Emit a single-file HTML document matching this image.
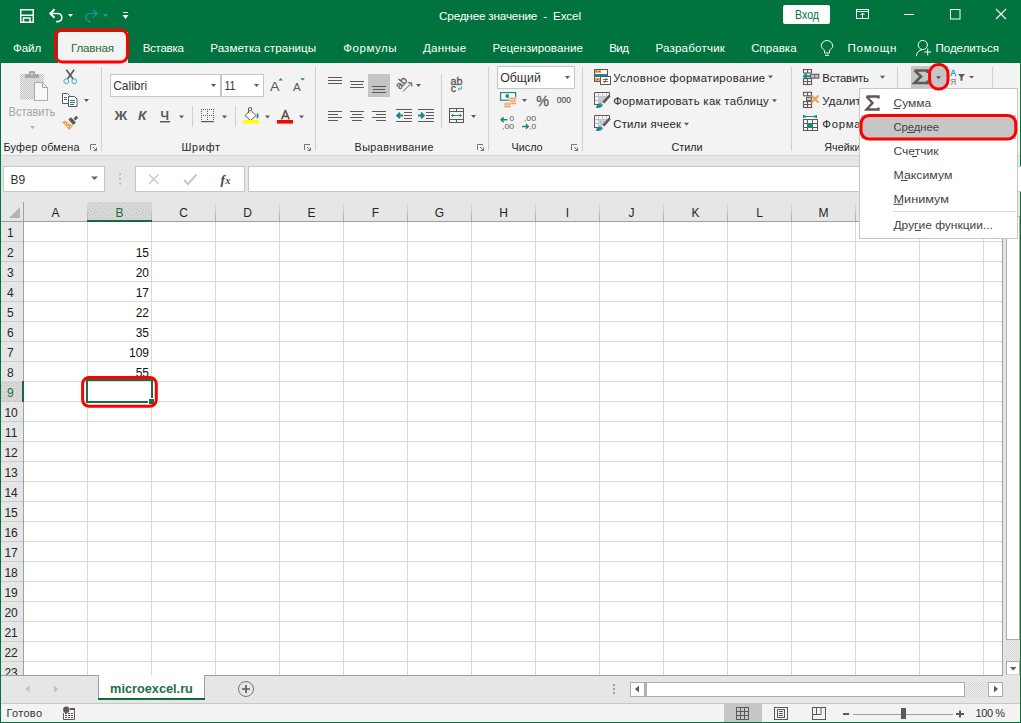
<!DOCTYPE html>
<html><head><meta charset="utf-8"><title>Excel</title>
<style>
html,body{margin:0;padding:0;width:1021px;height:723px;overflow:hidden;background:#01733e}
svg{display:block;font-family:"Liberation Sans",sans-serif}
</style></head><body>
<svg width="1021" height="723" viewBox="0 0 1021 723">
<defs>
<pattern id="gridp" x="24" y="222" width="64" height="20" patternUnits="userSpaceOnUse">
<rect width="64" height="20" fill="#fff"/><rect x="63" width="1" height="20" fill="#d9d9d9"/><rect y="19" width="64" height="1" fill="#d9d9d9"/>
</pattern>
<pattern id="dith" x="0" y="0" width="2" height="2" patternUnits="userSpaceOnUse"><rect width="2" height="2" fill="#eeeeee"/><rect width="1" height="1" fill="#d2d2d2"/><rect x="1" y="1" width="1" height="1" fill="#d8d8d8"/></pattern>
<pattern id="dith2" x="0" y="0" width="2" height="2" patternUnits="userSpaceOnUse"><rect width="2" height="2" fill="#e9e9e9"/><rect width="1" height="1" fill="#c2c2c2"/><rect x="1" y="1" width="1" height="1" fill="#c8c8c8"/></pattern>
<pattern id="hdot" x="0" y="0" width="6" height="6" patternUnits="userSpaceOnUse"><rect width="6" height="6" fill="#d7d7d7"/><rect x="1" y="1" width="1" height="1" fill="#bdbdbd"/><rect x="4" y="2" width="1" height="1" fill="#c2c2c2"/><rect x="2" y="4" width="1" height="1" fill="#c2c2c2"/><rect x="5" y="5" width="1" height="1" fill="#bdbdbd"/></pattern>
<linearGradient id="hsep" x1="0" y1="0" x2="0" y2="1"><stop offset="0" stop-color="#e0e2e1"/><stop offset="1" stop-color="#a9b0ad"/></linearGradient>
</defs>
<rect x="0" y="0" width="1021" height="723" fill="#01733e" />
<rect x="1" y="63" width="1019" height="92" fill="#f3f3f3" />
<rect x="1" y="155" width="1019" height="1" fill="#d5d5d5" />
<rect x="1" y="156" width="1019" height="46" fill="#e6e6e6" />
<path d="M20.75 9.75h12.5v12.5h-12.5z" fill="none" stroke="#ffffff" stroke-width="1.5"/>
<path d="M20.75 15.25h12.5" stroke="#ffffff" stroke-width="1.5"/>
<path d="M23.5 22v-4h6.5v4" fill="none" stroke="#ffffff" stroke-width="1.5"/>
<path d="M50.5 13.5h7.2a4.1 4.1 0 0 1 0 8.2h-1.5" fill="none" stroke="#ffffff" stroke-width="1.7"/>
<path d="M54.5 9.3l-4.2 4.2l4.2 4.2" fill="none" stroke="#ffffff" stroke-width="2"/>
<path d="M68 14h5l-2.5 3z" fill="#ffffff"/>
<path d="M96.5 13.5h-6.5a4.1 4.1 0 0 0 0 8.2h1" fill="none" stroke="#2e9b95" stroke-width="1.6" opacity="0.75"/>
<path d="M93 9.5l4 4l-4 4" fill="none" stroke="#2e9b95" stroke-width="1.6" opacity="0.75"/>
<path d="M103 14h5l-2.5 3z" fill="#2e9b95"/>
<rect x="123" y="12" width="5" height="1" fill="#ffffff" />
<path d="M122.5 15h6l-3.0 4z" fill="#ffffff"/>
<text x="439" y="20" font-size="11.8" fill="#ffffff" textLength="142" lengthAdjust="spacing" xml:space="preserve">Среднее значение  -  Excel</text>
<rect x="783" y="5" width="47" height="19" rx="2" fill="#fff"/>
<text x="795" y="19" font-size="12" fill="#01733e" textLength="24" lengthAdjust="spacingAndGlyphs" >Вход</text>
<g fill="none" stroke="#ffffff" stroke-width="1"><rect x="856.5" y="9.5" width="12" height="9"/><path d="M856.5 11.5h12"/><path d="M862.5 18v-5M860.5 15l2-2 2 2"/></g>
<rect x="904" y="14" width="10" height="1" fill="#ffffff" />
<rect x="950.5" y="9.5" width="9.5" height="9.5" fill="none" stroke="#ffffff" stroke-width="1"/>
<path d="M996 9l10 10M1006 9l-10 10" stroke="#ffffff" stroke-width="1.1"/>
<rect x="58" y="32" width="70" height="31" fill="#f3f3f3" />
<text x="13" y="52" font-size="11.6" fill="#ffffff" textLength="28.2" lengthAdjust="spacing" >Файл</text>
<text x="71" y="52" font-size="11.6" fill="#1e6b40" textLength="43.1" lengthAdjust="spacing" >Главная</text>
<text x="142.7" y="52" font-size="11.6" fill="#ffffff" textLength="41.2" lengthAdjust="spacing" >Вставка</text>
<text x="210.3" y="52" font-size="11.6" fill="#ffffff" textLength="105.8" lengthAdjust="spacing" >Разметка страницы</text>
<text x="343.3" y="52" font-size="11.6" fill="#ffffff" textLength="53.3" lengthAdjust="spacing" >Формулы</text>
<text x="423" y="52" font-size="11.6" fill="#ffffff" textLength="43.1" lengthAdjust="spacing" >Данные</text>
<text x="492.6" y="52" font-size="11.6" fill="#ffffff" textLength="90.3" lengthAdjust="spacing" >Рецензирование</text>
<text x="609.3" y="52" font-size="11.6" fill="#ffffff" textLength="19.6" lengthAdjust="spacing" >Вид</text>
<text x="655.4" y="52" font-size="11.6" fill="#ffffff" textLength="69.5" lengthAdjust="spacing" >Разработчик</text>
<text x="751.2" y="52" font-size="11.6" fill="#ffffff" textLength="45.4" lengthAdjust="spacing" >Справка</text>
<text x="847.5" y="52" font-size="11.6" fill="#ffffff" textLength="49" lengthAdjust="spacing" >Помощн</text>
<text x="935.5" y="52" font-size="11.6" fill="#ffffff" textLength="63.5" lengthAdjust="spacing" >Поделиться</text>
<g fill="none" stroke="#ffffff" stroke-width="1"><path d="M824.5 53v-2c0-1.6-3.3-3-3.3-4.7a5.8 5.8 0 0 1 11.6 0c0 1.7-3.3 3.1-3.3 4.7v2z"/><path d="M825 55.3h4"/></g>
<g fill="none" stroke="#ffffff" stroke-width="1"><circle cx="922.8" cy="45" r="4.6"/><path d="M916.3 56.2c0.5-4 2.8-6.2 5.8-6.5"/><path d="M927.7 48.5v7M924.2 52h7"/></g>
<rect x="55.5" y="30" width="72" height="32" rx="7" fill="none" stroke="#ff0000" stroke-width="3"/>
<rect x="20" y="74" width="24" height="25.5" fill="url(#dith2)"/>
<rect x="25" y="74" width="14" height="4" fill="#a8a8a8" />
<rect x="29" y="71" width="6" height="4" rx="1" fill="#a8a8a8"/>
<rect x="31" y="73" width="2" height="2" fill="#d8d8d8" />
<path d="M34.5 82.5h8l5 5v13h-13z" fill="#f7f7f7" stroke="#a8a8a8"/>
<path d="M42.5 82.5v5h5" fill="none" stroke="#a8a8a8"/>
<text x="8.6" y="116" font-size="12" fill="#a6a6a6" textLength="46.7" lengthAdjust="spacingAndGlyphs" >Вставить</text>
<path d="M30 126h5l-2.5 3z" fill="#b0b0b0"/>
<path d="M66.3 69.8l6.8 9.2M74.2 69.8l-6.8 9.2" stroke="#605856" stroke-width="1.7"/>
<g fill="none" stroke="#41a5ee" stroke-width="1"><circle cx="66.3" cy="81.2" r="2.4"/><circle cx="74.2" cy="81.2" r="2.4"/></g>
<path d="M62.5 93.5h5l2 2v8h-7z" fill="#fff" stroke="#605856"/>
<path d="M68.5 96.5h6l2.5 2.5v7.5h-8.5z" fill="#fff" stroke="#605856"/>
<g stroke="#1d8783"><path d="M64 97.5h3M64 99.5h3M70 100.5h5M70 102.5h5M70 104.5h4"/></g>
<path d="M84 99h5l-2.5 3z" fill="#605856"/>
<path d="M68.3 119.5L71 117.3L75.9 122.5L73.3 124.9z" fill="#605856"/>
<path d="M73.5 118.5L76.2 115.8L78.2 117.8L75.4 120.6z" fill="#605856"/>
<path d="M62 122.3L65 120.5L73 125.7L69.2 130.2L66 126z" fill="#f0a35f"/>
<g fill="#fdf3c8"><rect x="65" y="123" width="1" height="1"/><rect x="67" y="123" width="1" height="1"/><rect x="67.5" y="126" width="1" height="1"/><rect x="70" y="126" width="1" height="1"/></g>
<text x="3.5" y="150.6" font-size="10.8" fill="#262626" textLength="76" lengthAdjust="spacing" >Буфер обмена</text>
<g fill="none" stroke="#7a7372" stroke-width="1"><path d="M90.5 150v-5.5h5.5"/><path d="M93 147l3.5 3.5M96.5 147.5v3h-3"/></g>
<rect x="101" y="67" width="1" height="84" fill="#d0d0d0" />
<rect x="110.5" y="74.5" width="110" height="22" fill="#fff" stroke="#c6c6c6"/>
<rect x="221.5" y="74.5" width="42" height="22" fill="#fff" stroke="#c6c6c6"/>
<text x="113.2" y="89.8" font-size="12.5" fill="#333" textLength="34" lengthAdjust="spacingAndGlyphs" >Calibri</text>
<path d="M211 84h5l-2.5 3z" fill="#605856"/>
<text x="224.4" y="89.8" font-size="12.5" fill="#333" textLength="11" lengthAdjust="spacingAndGlyphs" >11</text>
<path d="M254 84h5l-2.5 3z" fill="#605856"/>
<text x="270" y="91" font-size="13" fill="#605856" textLength="9.5" lengthAdjust="spacingAndGlyphs" >A</text>
<path d="M278.5 80.5l2.2-2.5l2.2 2.5z" fill="#1d8783"/>
<text x="293" y="91" font-size="10.5" fill="#605856" textLength="7.8" lengthAdjust="spacingAndGlyphs" >A</text>
<path d="M300.3 78.2h4.6l-2.3 2.4z" fill="#1d8783"/>
<text x="114.6" y="120.2" font-size="12.5" fill="#605856" textLength="12.7" lengthAdjust="spacingAndGlyphs" font-weight="bold" >Ж</text>
<text x="137.9" y="120.2" font-size="12.5" fill="#605856" textLength="8.5" lengthAdjust="spacingAndGlyphs" font-weight="bold" font-style="italic">К</text>
<text x="160.4" y="120.2" font-size="12.5" fill="#605856" textLength="8.5" lengthAdjust="spacingAndGlyphs" font-weight="bold" >Ч</text>
<rect x="160" y="121" width="10" height="1.5" fill="#605856" />
<path d="M179 115.5h5l-2.5 3z" fill="#605856"/>
<rect x="192" y="106" width="1" height="21" fill="#d0d0d0" />
<g fill="#605856"><rect x="201" y="109" width="1" height="1"/><rect x="201" y="115" width="1" height="1"/><rect x="203" y="109" width="1" height="1"/><rect x="203" y="115" width="1" height="1"/><rect x="205" y="109" width="1" height="1"/><rect x="205" y="115" width="1" height="1"/><rect x="207" y="109" width="1" height="1"/><rect x="207" y="115" width="1" height="1"/><rect x="209" y="109" width="1" height="1"/><rect x="209" y="115" width="1" height="1"/><rect x="211" y="109" width="1" height="1"/><rect x="211" y="115" width="1" height="1"/><rect x="213" y="109" width="1" height="1"/><rect x="213" y="115" width="1" height="1"/><rect x="201" y="109" width="1" height="1"/><rect x="207" y="109" width="1" height="1"/><rect x="213" y="109" width="1" height="1"/><rect x="201" y="111" width="1" height="1"/><rect x="207" y="111" width="1" height="1"/><rect x="213" y="111" width="1" height="1"/><rect x="201" y="113" width="1" height="1"/><rect x="207" y="113" width="1" height="1"/><rect x="213" y="113" width="1" height="1"/><rect x="201" y="115" width="1" height="1"/><rect x="207" y="115" width="1" height="1"/><rect x="213" y="115" width="1" height="1"/><rect x="201" y="117" width="1" height="1"/><rect x="207" y="117" width="1" height="1"/><rect x="213" y="117" width="1" height="1"/><rect x="201" y="119" width="1" height="1"/><rect x="207" y="119" width="1" height="1"/><rect x="213" y="119" width="1" height="1"/></g>
<rect x="201" y="121" width="13" height="1.2" fill="#605856" />
<path d="M222 115.5h5l-2.5 3z" fill="#605856"/>
<rect x="235" y="106" width="1" height="21" fill="#d0d0d0" />
<path d="M245 115.5l5.5-5.5l5.5 5.5l-5.5 5z" fill="#fff" stroke="#605856" stroke-width="1"/>
<path d="M248.5 113v-4a1.6 1.6 0 0 1 3.2 0v1" fill="none" stroke="#605856" stroke-width="1"/>
<path d="M257 112.5q2.5 2.5 1 5.5l-1.5 0.5z" fill="#1d8783"/>
<rect x="243" y="120" width="16" height="3.6" fill="#ffff00" />
<path d="M265 115.5h5l-2.5 3z" fill="#605856"/>
<path d="M281.6 119.5l3.7-9h0.2l3.7 9M282.9 116.3h5" fill="none" stroke="#605856" stroke-width="1.7"/>
<rect x="277" y="120" width="16" height="3.6" fill="#ff0000" />
<path d="M299 115.5h5l-2.5 3z" fill="#605856"/>
<text x="181.4" y="150.8" font-size="10.8" fill="#262626" textLength="38.6" lengthAdjust="spacing" >Шрифт</text>
<g fill="none" stroke="#7a7372" stroke-width="1"><path d="M304.5 150v-5.5h5.5"/><path d="M307 147l3.5 3.5M310.5 147.5v3h-3"/></g>
<rect x="315" y="67" width="1" height="84" fill="#d0d0d0" />
<rect x="328" y="77" width="14" height="1" fill="#605856" />
<rect x="328" y="80" width="14" height="1" fill="#605856" />
<rect x="328" y="83" width="14" height="1" fill="#605856" />
<rect x="350" y="81" width="14" height="1" fill="#605856" />
<rect x="351" y="84" width="12" height="1" fill="#605856" />
<rect x="350" y="87" width="14" height="1" fill="#605856" />
<rect x="368" y="74" width="22" height="23" fill="#c5c5c5" />
<rect x="372" y="86" width="14" height="1" fill="#605856" />
<rect x="373" y="89" width="12" height="1" fill="#605856" />
<rect x="372" y="92" width="14" height="1" fill="#605856" />
<text x="0" y="0" font-size="11" fill="#605856" stroke="#605856" stroke-width="0.3" transform="translate(400 90) rotate(-50)">ab</text>
<path d="M403 91.5l8.5-8.5M408 82.8h3.8v3.8" fill="none" stroke="#605856" stroke-width="1"/>
<path d="M416 84h5l-2.5 3z" fill="#605856"/>
<rect x="441" y="74" width="1" height="54" fill="#d0d0d0" />
<text x="450.5" y="84.6" font-size="10.5" fill="#605856" textLength="12" lengthAdjust="spacingAndGlyphs" stroke="#605856" stroke-width="0.35">ab</text>
<text x="450.8" y="91.6" font-size="10.5" fill="#605856" stroke="#605856" stroke-width="0.35">c</text>
<path d="M461.5 86.5v2.5h-3M459.5 87.8l-1.3 1.2l1.3 1.2" fill="none" stroke="#1e9bc0" stroke-width="0.9"/>
<rect x="328" y="111" width="14" height="1" fill="#605856" />
<rect x="328" y="114" width="10" height="1" fill="#605856" />
<rect x="328" y="117" width="14" height="1" fill="#605856" />
<rect x="328" y="120" width="10" height="1" fill="#605856" />
<rect x="350" y="111" width="14" height="1" fill="#605856" />
<rect x="352" y="114" width="10" height="1" fill="#605856" />
<rect x="350" y="117" width="14" height="1" fill="#605856" />
<rect x="352" y="120" width="10" height="1" fill="#605856" />
<rect x="372" y="111" width="14" height="1" fill="#605856" />
<rect x="376" y="114" width="10" height="1" fill="#605856" />
<rect x="372" y="117" width="14" height="1" fill="#605856" />
<rect x="376" y="120" width="10" height="1" fill="#605856" />
<rect x="396" y="109" width="16" height="1" fill="#605856" />
<rect x="404" y="112" width="8" height="1" fill="#605856" />
<rect x="404" y="115" width="8" height="1" fill="#605856" />
<rect x="404" y="118" width="8" height="1" fill="#605856" />
<rect x="396" y="121" width="16" height="1" fill="#605856" />
<path d="M403 115.5h-5.5M400 112.8l-2.7 2.7l2.7 2.7" fill="none" stroke="#1d8783" stroke-width="2"/>
<rect x="418" y="109" width="16" height="1" fill="#605856" />
<rect x="426" y="112" width="8" height="1" fill="#605856" />
<rect x="426" y="115" width="8" height="1" fill="#605856" />
<rect x="426" y="118" width="8" height="1" fill="#605856" />
<rect x="418" y="121" width="16" height="1" fill="#605856" />
<path d="M418 115.5h5.5M421 112.8l2.7 2.7l-2.7 2.7" fill="none" stroke="#1d8783" stroke-width="2"/>
<g fill="none" stroke="#605856" stroke-width="1"><rect x="449.5" y="108.5" width="14" height="14"/><path d="M449.5 111.5h14M449.5 119.5h14M456.5 108.5v3M456.5 119.5v3"/></g>
<path d="M451.5 115.5h10M453.3 114l-1.8 1.5l1.8 1.5M459.7 114l1.8 1.5l-1.8 1.5" fill="none" stroke="#1d8783" stroke-width="1"/>
<path d="M471 115h5l-2.5 3z" fill="#605856"/>
<text x="354.6" y="150.8" font-size="10.8" fill="#262626" textLength="78.8" lengthAdjust="spacing" >Выравнивание</text>
<g fill="none" stroke="#7a7372" stroke-width="1"><path d="M477.5 150v-5.5h5.5"/><path d="M480 147l3.5 3.5M483.5 147.5v3h-3"/></g>
<rect x="488" y="67" width="1" height="84" fill="#d0d0d0" />
<rect x="497.5" y="66.5" width="77" height="22" fill="#fff" stroke="#c6c6c6"/>
<text x="500.2" y="81.6" font-size="12.5" fill="#333" textLength="40.6" lengthAdjust="spacingAndGlyphs" >Общий</text>
<path d="M565 76h5l-2.5 3z" fill="#605856"/>
<rect x="500.6" y="92.6" width="15" height="7.6" fill="#fff" stroke="#1d8783" stroke-width="1.2"/>
<circle cx="507.3" cy="96" r="1.9" fill="#1d8783"/>
<circle cx="507.8" cy="95.5" r="0.8" fill="#41a5ee"/>
<g fill="#f0a35f" stroke="#f3f3f3" stroke-width="0.6"><rect x="509" y="97.2" width="7.2" height="2.4" rx="1"/><rect x="509" y="99.7" width="7.2" height="2.4" rx="1"/><rect x="509" y="102.2" width="7.2" height="2.4" rx="1"/><rect x="503.8" y="102.8" width="7.2" height="2.4" rx="1"/><rect x="503.8" y="105.3" width="7.2" height="2.4" rx="1"/></g>
<path d="M522 99h5l-2.5 3z" fill="#605856"/>
<text x="536.3" y="105.7" font-size="14.5" fill="#605856" textLength="12.7" lengthAdjust="spacingAndGlyphs" stroke="#605856" stroke-width="0.3">%</text>
<text x="556.8" y="102.8" font-size="9" fill="#605856" textLength="14.2" lengthAdjust="spacingAndGlyphs" stroke="#605856" stroke-width="0.25">000</text>
<path d="M507.5 119.8h-6.5M503.6 117.4l-2.4 2.4l2.4 2.4" fill="none" stroke="#1d8783" stroke-width="1.5"/>
<text x="509.6" y="121.4" font-size="8" fill="#605856" textLength="4.6" lengthAdjust="spacingAndGlyphs" >0</text>
<text x="502" y="128.9" font-size="8" fill="#605856" textLength="12.2" lengthAdjust="spacingAndGlyphs" >,00</text>
<text x="523.8" y="121.4" font-size="8" fill="#605856" textLength="12.3" lengthAdjust="spacingAndGlyphs" >,00</text>
<path d="M522 126.4h6.5M525.9 124l2.4 2.4l-2.4 2.4" fill="none" stroke="#1d8783" stroke-width="1.5"/>
<text x="529.2" y="128.9" font-size="8" fill="#605856" textLength="7" lengthAdjust="spacingAndGlyphs" >,0</text>
<text x="511.4" y="150.8" font-size="10.8" fill="#262626" textLength="31.2" lengthAdjust="spacing" >Число</text>
<g fill="none" stroke="#7a7372" stroke-width="1"><path d="M571.5 150v-5.5h5.5"/><path d="M574 147l3.5 3.5M577.5 147.5v3h-3"/></g>
<rect x="582" y="67" width="1" height="84" fill="#d0d0d0" />
<rect x="594.5" y="69.5" width="13" height="12" fill="#fff" stroke="#605856"/>
<rect x="595" y="70" width="6" height="3" fill="#f0a35f" />
<rect x="595" y="74" width="12" height="3" fill="#1d8783" />
<rect x="595" y="78" width="5" height="3" fill="#f0a35f" />
<rect x="596" y="71" width="1" height="1" fill="#e02020" />
<rect x="599" y="71" width="1" height="1" fill="#e02020" />
<rect x="597" y="79" width="1" height="1" fill="#e02020" />
<rect x="600.5" y="76.5" width="10" height="8" fill="#fff" stroke="#605856"/>
<path d="M603 79.5h5M603 81.5h5M606.5 78l-2 5" stroke="#605856" stroke-width="0.9"/>
<g fill="none" stroke="#c4c4c4" stroke-width="1"><path d="M595 96.5h14M595 100.5h12M598.5 93v11M602.5 93v10M606.5 93v6"/></g>
<rect x="599" y="97" width="7" height="3" fill="#c8c8c8" />
<rect x="599" y="101" width="3" height="3" fill="#c8c8c8" />
<rect x="603" y="101" width="2" height="2" fill="#c8c8c8" />
<g fill="none" stroke="#605856" stroke-width="1"><path d="M594.5 105v-12.5h15v3.5M594.5 104.5h4"/></g>
<path d="M609.8 95.5l-6.5 7.2" stroke="#605856" stroke-width="2.6"/>
<path d="M596 107.8q0.3-3.8 4.6-4.8l2.3 2.1q-1.5 3.6-6.9 2.7z" fill="#1d8783"/>
<path d="M600.6 103q-1 2.5 2.3 2.1" fill="none" stroke="#41a5ee" stroke-width="0.9"/>
<g fill="none" stroke="#c4c4c4" stroke-width="1"><path d="M595 119.5h14M595 123.5h12M598.5 116v11M602.5 116v10M606.5 116v6"/></g>
<rect x="599" y="120" width="7" height="6" fill="#d4d4d4" />
<g fill="#41a5ee"><rect x="600" y="121" width="1" height="1"/><rect x="603" y="121" width="1" height="1"/><rect x="601" y="123" width="1" height="1"/><rect x="604" y="123" width="1" height="1"/></g>
<g fill="none" stroke="#605856" stroke-width="1"><path d="M594.5 128v-12.5h15v3.5M594.5 127.5h4"/></g>
<path d="M609.8 118.5l-6.5 7.2" stroke="#605856" stroke-width="2.6"/>
<path d="M596 130.8q0.3-3.8 4.6-4.8l2.3 2.1q-1.5 3.6-6.9 2.7z" fill="#1d8783"/>
<path d="M600.6 126q-1 2.5 2.3 2.1" fill="none" stroke="#41a5ee" stroke-width="0.9"/>
<text x="613.2" y="81.7" font-size="11.4" fill="#262626" textLength="152" lengthAdjust="spacing" >Условное форматирование</text>
<path d="M768 75.6h5l-2.5 3z" fill="#605856"/>
<text x="613.2" y="104.7" font-size="11.4" fill="#262626" textLength="155.6" lengthAdjust="spacing" >Форматировать как таблицу</text>
<path d="M772 99.3h5l-2.5 3z" fill="#605856"/>
<text x="613.2" y="127.8" font-size="11.4" fill="#262626" textLength="67.8" lengthAdjust="spacing" >Стили ячеек</text>
<path d="M684 122.8h5l-2.5 3z" fill="#605856"/>
<text x="671.5" y="150.8" font-size="10.8" fill="#262626" textLength="31" lengthAdjust="spacing" >Стили</text>
<rect x="791" y="67" width="1" height="84" fill="#d0d0d0" />
<g fill="none" stroke="#605856" stroke-width="1.1"><rect x="803.5" y="69.5" width="8" height="3.5"/><path d="M807.5 69.5v3.5"/><rect x="803.5" y="78.5" width="8" height="6"/><path d="M803.5 81.5h8M807.5 78.5v6"/></g>
<rect x="810.5" y="74.3" width="8.3" height="3.8" fill="#c8c8c8" stroke="#605856" stroke-width="1.1"/>
<path d="M814.7 74.3v3.8" stroke="#605856" stroke-width="0.8"/>
<path d="M810 76.2h-6M806.6 73.6l-2.6 2.6l2.6 2.6" fill="none" stroke="#1d8783" stroke-width="2"/>
<g fill="none" stroke="#605856" stroke-width="1.1"><rect x="803.5" y="92.3" width="8" height="3.5"/><path d="M807.5 92.3v3.5"/><rect x="803.5" y="101.5" width="8" height="6"/><path d="M803.5 104.5h8M807.5 101.5v6"/></g>
<rect x="806.5" y="97.3" width="5" height="3.3" fill="#c8c8c8" stroke="#605856" stroke-width="1"/>
<path d="M811.5 95.5l7 7M818.5 95.5l-7 7" stroke="#f0a35f" stroke-width="2.2"/>
<path d="M803.5 116.5h13M803.5 115v3M816.5 115v3M805.5 115l-1.5 1.5l1.5 1.5M814.5 115l1.5 1.5l-1.5 1.5" fill="none" stroke="#1d8783" stroke-width="1"/>
<g fill="none" stroke="#605856" stroke-width="1"><rect x="803.5" y="119.5" width="14" height="11"/><path d="M803.5 123.5h14M803.5 127.5h14M807.5 119.5v11M812.5 119.5v11"/></g>
<rect x="807" y="123" width="6" height="5" fill="#1d8783" />
<text x="822.3" y="81.7" font-size="11.4" fill="#262626" textLength="46.7" lengthAdjust="spacing" >Вставить</text>
<path d="M880 75.8h5l-2.5 3z" fill="#605856"/>
<text x="822.3" y="104.7" font-size="11.4" fill="#262626" textLength="44.5" lengthAdjust="spacing" >Удалить</text>
<text x="822.3" y="127.8" font-size="11.4" fill="#262626" textLength="44" lengthAdjust="spacing" >Формат</text>
<text x="824.3" y="150.8" font-size="10.8" fill="#262626" >Ячейки</text>
<rect x="897" y="67" width="1" height="84" fill="#d0d0d0" />
<rect x="911" y="66" width="37" height="23" fill="#c5c5c5" />
<path d="M914.5 70.5h13v2.5M914.5 70.5l6.5 6l-6.5 6.5h13v-2.5" fill="none" stroke="#605856" stroke-width="2.6"/>
<path d="M936 76.2h5l-2.5 3z" fill="#605856"/>
<text x="950.2" y="75.8" font-size="9" fill="#1f8fd0" textLength="5.8" lengthAdjust="spacingAndGlyphs" stroke="#1f8fd0" stroke-width="0.3">А</text>
<text x="950.4" y="84.6" font-size="8.8" fill="#8a8a8a" textLength="5.6" lengthAdjust="spacingAndGlyphs" stroke="#8a8a8a" stroke-width="0.2">Я</text>
<path d="M958 74h7l-2.5 3v3.7h-2v-3.7z" fill="#605856"/>
<path d="M969 76h5l-2.5 2.6z" fill="#605856"/>
<rect x="992" y="67" width="1" height="22" fill="#d0d0d0" />
<rect x="3.5" y="166.5" width="101" height="25" fill="#fff" stroke="#c6c6c6"/>
<text x="10.6" y="183.5" font-size="12" fill="#333" textLength="14.7" lengthAdjust="spacingAndGlyphs" >B9</text>
<path d="M91 176.5h7l-3.5 3.5z" fill="#6d6461"/>
<g fill="#a8a8a8"><rect x="119.3" y="173.5" width="1.6" height="1.6"/><rect x="119.3" y="178.2" width="1.6" height="1.6"/><rect x="119.3" y="182.9" width="1.6" height="1.6"/></g>
<rect x="135.5" y="166.5" width="109" height="25" fill="#fff" stroke="#c6c6c6"/>
<path d="M149 174.5l9.5 9.5M158.5 174.5l-9.5 9.5" stroke="#c8c8c8" stroke-width="1.3"/>
<path d="M184 180l4 4l8.5-9.5" fill="none" stroke="#c8c8c8" stroke-width="2"/>
<text x="220.5" y="183.5" font-size="13.5" font-family="Liberation Serif" font-style="italic" font-weight="bold" fill="#4a4443">f</text>
<text x="225.3" y="183.6" font-size="10.5" font-family="Liberation Serif" font-style="italic" font-weight="bold" fill="#4a4443">x</text>
<rect x="248.5" y="166.5" width="780" height="25" fill="#fff" stroke="#c6c6c6"/>
<rect x="1" y="202" width="1002" height="19" fill="#e6e6e6" />
<rect x="24" y="222" width="978" height="453" fill="url(#gridp)"/>
<rect x="1" y="222" width="22" height="453" fill="#e6e6e6" />
<rect x="1" y="241" width="22" height="1" fill="#c9cccb" />
<rect x="1" y="261" width="22" height="1" fill="#c9cccb" />
<rect x="1" y="281" width="22" height="1" fill="#c9cccb" />
<rect x="1" y="301" width="22" height="1" fill="#c9cccb" />
<rect x="1" y="321" width="22" height="1" fill="#c9cccb" />
<rect x="1" y="341" width="22" height="1" fill="#c9cccb" />
<rect x="1" y="361" width="22" height="1" fill="#c9cccb" />
<rect x="1" y="381" width="22" height="1" fill="#c9cccb" />
<rect x="1" y="401" width="22" height="1" fill="#c9cccb" />
<rect x="1" y="421" width="22" height="1" fill="#c9cccb" />
<rect x="1" y="441" width="22" height="1" fill="#c9cccb" />
<rect x="1" y="461" width="22" height="1" fill="#c9cccb" />
<rect x="1" y="481" width="22" height="1" fill="#c9cccb" />
<rect x="1" y="501" width="22" height="1" fill="#c9cccb" />
<rect x="1" y="521" width="22" height="1" fill="#c9cccb" />
<rect x="1" y="541" width="22" height="1" fill="#c9cccb" />
<rect x="1" y="561" width="22" height="1" fill="#c9cccb" />
<rect x="1" y="581" width="22" height="1" fill="#c9cccb" />
<rect x="1" y="601" width="22" height="1" fill="#c9cccb" />
<rect x="1" y="621" width="22" height="1" fill="#c9cccb" />
<rect x="1" y="641" width="22" height="1" fill="#c9cccb" />
<rect x="1" y="661" width="22" height="1" fill="#c9cccb" />
<rect x="87" y="202" width="1" height="19" fill="url(#hsep)"/>
<rect x="151" y="202" width="1" height="19" fill="url(#hsep)"/>
<rect x="215" y="202" width="1" height="19" fill="url(#hsep)"/>
<rect x="279" y="202" width="1" height="19" fill="url(#hsep)"/>
<rect x="343" y="202" width="1" height="19" fill="url(#hsep)"/>
<rect x="407" y="202" width="1" height="19" fill="url(#hsep)"/>
<rect x="471" y="202" width="1" height="19" fill="url(#hsep)"/>
<rect x="535" y="202" width="1" height="19" fill="url(#hsep)"/>
<rect x="599" y="202" width="1" height="19" fill="url(#hsep)"/>
<rect x="663" y="202" width="1" height="19" fill="url(#hsep)"/>
<rect x="727" y="202" width="1" height="19" fill="url(#hsep)"/>
<rect x="791" y="202" width="1" height="19" fill="url(#hsep)"/>
<rect x="855" y="202" width="1" height="19" fill="url(#hsep)"/>
<rect x="919" y="202" width="1" height="19" fill="url(#hsep)"/>
<rect x="983" y="202" width="1" height="19" fill="url(#hsep)"/>
<rect x="88" y="202" width="63" height="18" fill="url(#hdot)"/>
<rect x="1" y="221" width="1002" height="1" fill="#9ba3a0" />
<rect x="87" y="220" width="65" height="2" fill="#136b3b" />
<rect x="23" y="202" width="1" height="473" fill="#9ba3a0" />
<path d="M20 207v11h-11z" fill="#b4b4b4"/>
<text x="55.5" y="217" font-size="12" fill="#262626" text-anchor="middle" >A</text>
<text x="119.5" y="217" font-size="12" fill="#1e6b40" text-anchor="middle" >B</text>
<text x="183.5" y="217" font-size="12" fill="#262626" text-anchor="middle" >C</text>
<text x="247.5" y="217" font-size="12" fill="#262626" text-anchor="middle" >D</text>
<text x="311.5" y="217" font-size="12" fill="#262626" text-anchor="middle" >E</text>
<text x="375.5" y="217" font-size="12" fill="#262626" text-anchor="middle" >F</text>
<text x="439.5" y="217" font-size="12" fill="#262626" text-anchor="middle" >G</text>
<text x="503.5" y="217" font-size="12" fill="#262626" text-anchor="middle" >H</text>
<text x="567.5" y="217" font-size="12" fill="#262626" text-anchor="middle" >I</text>
<text x="631.5" y="217" font-size="12" fill="#262626" text-anchor="middle" >J</text>
<text x="695.5" y="217" font-size="12" fill="#262626" text-anchor="middle" >K</text>
<text x="759.5" y="217" font-size="12" fill="#262626" text-anchor="middle" >L</text>
<text x="823.5" y="217" font-size="12" fill="#262626" text-anchor="middle" >M</text>
<text x="887.5" y="217" font-size="12" fill="#262626" text-anchor="middle" >N</text>
<text x="951.5" y="217" font-size="12" fill="#262626" text-anchor="middle" >O</text>
<rect x="1" y="381" width="21" height="20" fill="url(#hdot)"/>
<rect x="22" y="381" width="2" height="21" fill="#136b3b" />
<text x="10.4" y="236.8" font-size="12" fill="#262626" text-anchor="middle" >1</text>
<text x="10.4" y="256.8" font-size="12" fill="#262626" text-anchor="middle" >2</text>
<text x="10.4" y="276.8" font-size="12" fill="#262626" text-anchor="middle" >3</text>
<text x="10.4" y="296.8" font-size="12" fill="#262626" text-anchor="middle" >4</text>
<text x="10.4" y="316.8" font-size="12" fill="#262626" text-anchor="middle" >5</text>
<text x="10.4" y="336.8" font-size="12" fill="#262626" text-anchor="middle" >6</text>
<text x="10.4" y="356.8" font-size="12" fill="#262626" text-anchor="middle" >7</text>
<text x="10.4" y="376.8" font-size="12" fill="#262626" text-anchor="middle" >8</text>
<text x="10.4" y="396.8" font-size="12" fill="#217346" text-anchor="middle" >9</text>
<text x="11.1" y="416.8" font-size="12" fill="#262626" text-anchor="middle" >10</text>
<text x="11.1" y="436.8" font-size="12" fill="#262626" text-anchor="middle" >11</text>
<text x="11.1" y="456.8" font-size="12" fill="#262626" text-anchor="middle" >12</text>
<text x="11.1" y="476.8" font-size="12" fill="#262626" text-anchor="middle" >13</text>
<text x="11.1" y="496.8" font-size="12" fill="#262626" text-anchor="middle" >14</text>
<text x="11.1" y="516.8" font-size="12" fill="#262626" text-anchor="middle" >15</text>
<text x="11.1" y="536.8" font-size="12" fill="#262626" text-anchor="middle" >16</text>
<text x="11.1" y="556.8" font-size="12" fill="#262626" text-anchor="middle" >17</text>
<text x="11.1" y="576.8" font-size="12" fill="#262626" text-anchor="middle" >18</text>
<text x="11.1" y="596.8" font-size="12" fill="#262626" text-anchor="middle" >19</text>
<text x="11.1" y="616.8" font-size="12" fill="#262626" text-anchor="middle" >20</text>
<text x="11.1" y="636.8" font-size="12" fill="#262626" text-anchor="middle" >21</text>
<text x="11.1" y="656.8" font-size="12" fill="#262626" text-anchor="middle" >22</text>
<text x="11.1" y="676.8" font-size="12" fill="#262626" text-anchor="middle" >23</text>
<text x="149" y="256.8" font-size="12" fill="#111" text-anchor="end" >15</text>
<text x="149" y="276.8" font-size="12" fill="#111" text-anchor="end" >20</text>
<text x="149" y="296.8" font-size="12" fill="#111" text-anchor="end" >17</text>
<text x="149" y="316.8" font-size="12" fill="#111" text-anchor="end" >22</text>
<text x="149" y="336.8" font-size="12" fill="#111" text-anchor="end" >35</text>
<text x="149" y="356.8" font-size="12" fill="#111" text-anchor="end" >109</text>
<text x="149" y="376.8" font-size="12" fill="#111" text-anchor="end" >55</text>
<rect x="87" y="380" width="65" height="22" fill="none" stroke="#1d6b40" stroke-width="2"/>
<rect x="148" y="398" width="7" height="7" fill="#fff" />
<rect x="149" y="399" width="5" height="5" fill="#1d6b40" />
<rect x="82.6" y="377.5" width="73.7" height="28.8" rx="6.5" fill="none" stroke="#ff0000" stroke-width="3"/>
<rect x="1002" y="202" width="1" height="473" fill="#9ba3a0" />
<rect x="1003" y="202" width="17" height="473" fill="#e6e6e6" />
<rect x="1006.5" y="202.5" width="13" height="459" fill="none"/>
<rect x="1006.5" y="216.5" width="13" height="423" fill="#fff" stroke="#ababab"/>
<rect x="1006" y="640" width="14" height="21" fill="url(#dith)"/>
<rect x="1006.5" y="661.5" width="13" height="13.5" fill="#fff" stroke="#ababab"/>
<path d="M1010 667h6.5l-3.25 3.5z" fill="#605856"/>
<rect x="1" y="675" width="1019" height="28" fill="#e6e6e6" />
<rect x="1" y="675" width="1002" height="1" fill="#9ba3a0" />
<path d="M29.5 685.5v7l-4-3.5z" fill="#c0c0c0"/>
<path d="M54 685.5v7l4-3.5z" fill="#c0c0c0"/>
<rect x="98" y="675" width="107" height="24" fill="#fff" />
<rect x="98" y="675" width="1" height="24" fill="#9ba3a0" />
<rect x="204" y="675" width="1" height="24" fill="#9ba3a0" />
<rect x="98" y="698" width="107" height="2" fill="#136b3b" />
<rect x="99" y="700" width="105" height="3" fill="#e6e6e6" />
<text x="110.1" y="692.8" font-size="13.2" fill="#1f6f43" textLength="82.8" lengthAdjust="spacingAndGlyphs" font-weight="bold" >microexcel.ru</text>
<circle cx="246" cy="689" r="7.5" fill="none" stroke="#7a7372" stroke-width="1"/>
<path d="M242 689h8M246 685v8" stroke="#605856" stroke-width="1.6"/>
<g fill="#a0a0a0"><rect x="613" y="684" width="2" height="2"/><rect x="613" y="688" width="2" height="2"/><rect x="613" y="692" width="2" height="2"/></g>
<rect x="965" y="682" width="23" height="15" fill="url(#dith)"/>
<rect x="630.5" y="682.5" width="14" height="14" fill="#fff" stroke="#ababab"/>
<rect x="645.5" y="682.5" width="319" height="14" fill="#fff" stroke="#ababab"/>
<rect x="645" y="683" width="2" height="13" fill="#b4b4b4" />
<rect x="988.5" y="682.5" width="14" height="14" fill="#fff" stroke="#ababab"/>
<path d="M639 685.5v7l-4-3.5z" fill="#605856"/>
<path d="M994 685.5v7l4-3.5z" fill="#605856"/>
<rect x="1" y="703" width="1019" height="19" fill="#f3f3f3" />
<rect x="1" y="703" width="1019" height="1" fill="#c8c8c8" />
<text x="6.4" y="716.8" font-size="11" fill="#333" textLength="35.6" lengthAdjust="spacing" >Готово</text>
<rect x="70" y="708" width="5" height="2" fill="#605856" />
<path d="M63.5 713v6.5h11v-9.5" fill="none" stroke="#605856" stroke-width="1"/>
<g fill="#605856"><rect x="65" y="713" width="2" height="1"/><rect x="68" y="713" width="2" height="1"/><rect x="71" y="713" width="2" height="1"/><rect x="65" y="715" width="2" height="1"/><rect x="68" y="715" width="2" height="1"/><rect x="71" y="715" width="2" height="1"/><rect x="65" y="717" width="2" height="1"/><rect x="68" y="717" width="2" height="1"/><rect x="71" y="717" width="2" height="1"/></g>
<circle cx="66.3" cy="709.8" r="3.2" fill="#605856"/>
<rect x="724" y="704" width="38" height="18" fill="#c6c6c6" />
<g fill="none" stroke="#605856" stroke-width="1"><rect x="736.5" y="707.5" width="12" height="12"/><path d="M736.5 711.5h12M736.5 715.5h12M740.5 707.5v12M744.5 707.5v12"/></g>
<g fill="none" stroke="#605856" stroke-width="1"><rect x="774.5" y="707.5" width="13" height="12"/><rect x="777.5" y="709.5" width="7" height="8"/><path d="M779 711.5h4M779 713.5h4M779 715.5h4"/></g>
<g fill="none" stroke="#605856" stroke-width="1"><rect x="812.5" y="707.5" width="13" height="12"/><path d="M812.5 714.5h8.5v-7M816.5 707.5v7"/></g>
<rect x="843" y="713" width="6" height="2" fill="#605856" />
<rect x="853" y="714" width="100" height="1" fill="#a0a0a0" />
<rect x="901" y="708" width="5" height="11" fill="#605856" />
<path d="M956 714h8M960 710.5v7" stroke="#605856" stroke-width="2"/>
<text x="975.6" y="716.8" font-size="11" fill="#333" textLength="29.4" lengthAdjust="spacing" >100 %</text>
<rect x="859.5" y="88.5" width="158" height="150" fill="#fff" stroke="#c6c6c6"/>
<path d="M866.5 96.5h12v2M866.5 96.5l6 6.5l-6 6.5h12v-2" fill="none" stroke="#605856" stroke-width="2.4"/>
<rect x="861" y="115" width="155" height="24" fill="#c6c6c6" />
<text x="893.5" y="107" font-size="11.8" fill="#444" textLength="37.6" lengthAdjust="spacingAndGlyphs" >Сумма</text>
<rect x="893.5" y="108" width="6.5" height="1" fill="#444" />
<text x="893.5" y="131" font-size="11.8" fill="#444" textLength="45.5" lengthAdjust="spacingAndGlyphs" >Среднее</text>
<rect x="907" y="132" width="7" height="1" fill="#444" />
<text x="893.5" y="155" font-size="11.8" fill="#444" textLength="45" lengthAdjust="spacingAndGlyphs" >Счетчик</text>
<rect x="912" y="156" width="5" height="1" fill="#444" />
<text x="893.5" y="179" font-size="11.8" fill="#444" textLength="59" lengthAdjust="spacingAndGlyphs" >Максимум</text>
<rect x="901" y="180" width="6.5" height="1" fill="#444" />
<text x="893.5" y="202.8" font-size="11.8" fill="#444" textLength="55.5" lengthAdjust="spacingAndGlyphs" >Минимум</text>
<rect x="893.5" y="203.8" width="9.5" height="1" fill="#444" />
<text x="893.5" y="229" font-size="11.8" fill="#444" textLength="99.4" lengthAdjust="spacingAndGlyphs" >Другие функции...</text>
<rect x="915" y="230" width="6" height="1" fill="#444" />
<rect x="893" y="211" width="123" height="1" fill="#dadada" />
<rect x="861" y="115.5" width="154.8" height="23.5" rx="8" fill="none" stroke="#ff0000" stroke-width="3"/>
<rect x="929.6" y="64.6" width="18.4" height="24.3" rx="8.5" ry="9" fill="none" stroke="#ff0000" stroke-width="3"/>
</svg>
</body></html>
